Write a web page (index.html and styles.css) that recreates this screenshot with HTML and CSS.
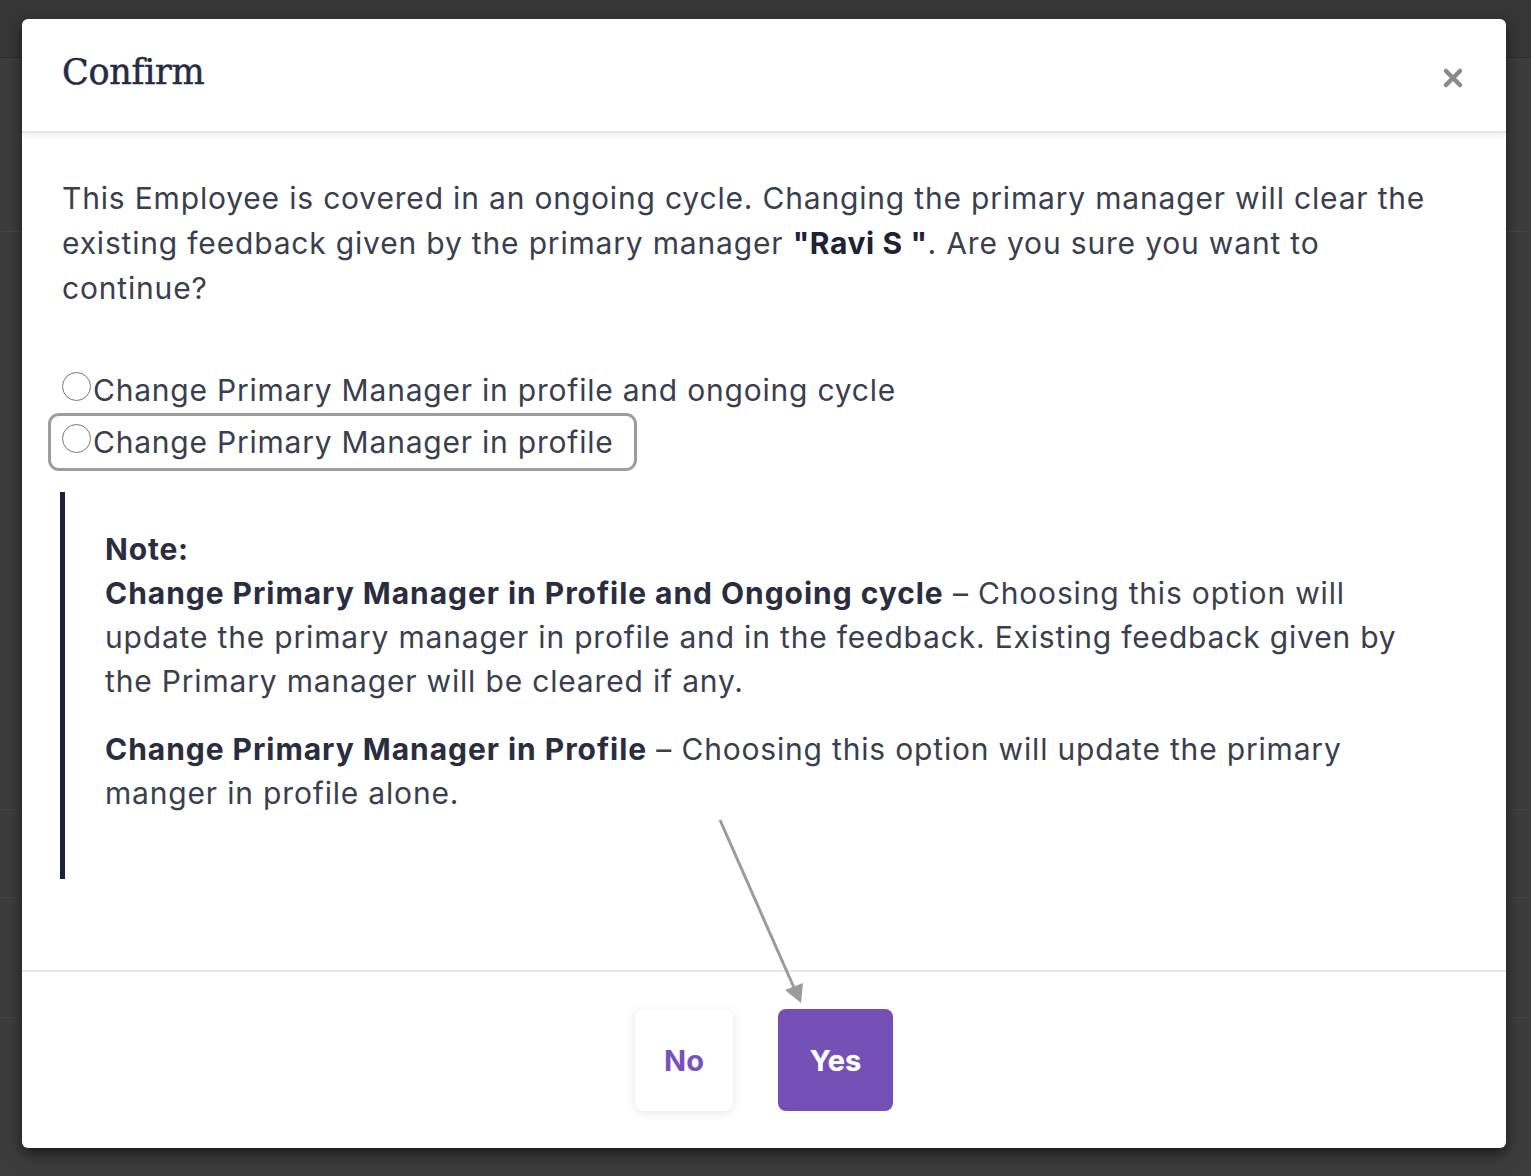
FILE: index.html
```html
<!DOCTYPE html>
<html lang="en">
<head>
<meta charset="utf-8">
<title>Confirm</title>
<link rel="stylesheet" href="styles.css">
</head>
<body>
<div class="backdrop">
  <div class="bd-top"></div>
  <div class="bd-row bd-r1"></div>
  <div class="bd-row bd-r2"></div>
  <div class="bd-row bd-r3"></div>
  <div class="bd-row bd-r4"></div>
  <div class="bd-row bd-r5"></div>
</div>

<div class="modal" role="dialog" aria-labelledby="modal-title">
  <div class="modal-header">
    <h2 id="modal-title" class="modal-title">Confirm</h2>
    <button class="close-btn" aria-label="Close">
      <svg width="22" height="22" viewBox="0 0 22 22"><path d="M4 4 L18 18 M18 4 L4 18" stroke="#8a8a8a" stroke-width="4.5" stroke-linecap="round"/></svg>
    </button>
  </div>

  <div class="modal-body">
    <p class="lead">This Employee is covered in an ongoing cycle. Changing the primary manager will clear the existing feedback given by the primary manager <b>"Ravi S "</b>. Are you sure you want to continue?</p>

    <div class="options">
      <label class="option"><span class="radio"></span>Change Primary Manager in profile and ongoing cycle</label>
      <label class="option focused"><span class="radio"></span>Change Primary Manager in profile</label>
    </div>

    <div class="note">
      <div class="note-title">Note:</div>
      <p><b>Change Primary Manager in Profile and Ongoing cycle</b> – Choosing this option will update the primary manager in profile and in the feedback. Existing feedback given by the Primary manager will be cleared if any.</p>
      <p class="second"><b>Change Primary Manager in Profile</b> – Choosing this option will update the primary manger in profile alone.</p>
    </div>
  </div>

  <div class="modal-footer">
    <button class="btn btn-no">No</button>
    <button class="btn btn-yes">Yes</button>
  </div>
</div>

<svg class="annotation" width="1531" height="1176" viewBox="0 0 1531 1176">
  <line x1="720" y1="820" x2="795" y2="990" stroke="#9b9b9b" stroke-width="3"/>
  <polygon points="801,1003 785,990 803,983" fill="#9b9b9b"/>
</svg>
</body>
</html>
```

FILE: styles.css
```css
* { box-sizing: border-box; }

html, body {
  margin: 0;
  padding: 0;
}

body {
  background: #3c3c3c;
  width: 1531px;
  height: 1176px;
  overflow: hidden;
  font-family: "Inter", "Liberation Sans", sans-serif;
}

.backdrop {
  display: flex;
  flex-direction: column;
}

.bd-top {
  height: 58px;
  background: #363636;
  border-bottom: 1px solid #2e2e2e;
}

.bd-row {
  border-bottom: 1px solid #444;
}
.bd-r1 { height: 174px; }
.bd-r2 { height: 578px; }
.bd-r3 { height: 88px; }
.bd-r4 { height: 120px; }
.bd-r5 { height: 150px; border-bottom: none; }

.modal {
  position: absolute;
  top: 19px;
  left: 22px;
  width: 1484px;
  height: 1129px;
  background: #fff;
  border-radius: 6px;
  display: flex;
  flex-direction: column;
  box-shadow: 0 6px 14px rgba(0, 0, 0, 0.55);
  overflow: hidden;
}

.modal-header {
  height: 114px;
  flex: none;
  display: flex;
  align-items: flex-start;
  justify-content: space-between;
  padding: 0 42px 0 40px;
  border-bottom: 2px solid #e4e6ea;
  box-shadow: 0 3px 5px rgba(0, 0, 0, 0.06);
  position: relative;
  z-index: 1;
}

.modal-title {
  margin: 33px 0 0;
  font-family: "DejaVu Serif", "Liberation Serif", serif;
  font-weight: normal;
  font-size: 35px;
  line-height: 40px;
  color: #262b45;
  letter-spacing: -0.3px;
  -webkit-text-stroke: 0.5px #262b45;
}

.close-btn {
  margin-top: 48px;
  border: none;
  background: none;
  padding: 0;
  width: 22px;
  height: 22px;
  cursor: pointer;
}
.close-btn svg { display: block; }

.modal-body {
  flex: 1;
  padding: 43px 40px 0;
}

.lead {
  margin: 0;
  font-size: 30px;
  line-height: 45px;
  color: #3a3e4e;
  letter-spacing: 0.82px;
}
.lead b {
  color: #1f2236;
  font-weight: 700;
  letter-spacing: 0.6px;
}

.options {
  margin-top: 53px;
  display: flex;
  flex-direction: column;
}

.option {
  display: flex;
  align-items: center;
  width: fit-content;
  height: 52px;
  margin-left: -11px;
  padding: 0 20px 0 11px;
  border-radius: 8px;
  font-size: 30px;
  color: #3a3e4e;
  letter-spacing: 0.78px;
}
.option.focused {
  outline: 3px solid #9d9d9d;
}

.radio {
  width: 29px;
  height: 29px;
  border: 1.5px solid #777;
  border-radius: 50%;
  margin-top: -8px;
  margin-right: 2px;
  flex: none;
}

.note {
  margin: 24px 0 0 -2px;
  border-left: 5px solid #1d2040;
  padding: 35px 40px 64px 40px;
  font-size: 30px;
  line-height: 44px;
  color: #3a3e4e;
  letter-spacing: 0.82px;
}
.note-title {
  font-weight: 700;
  color: #2a2d40;
}
.note p {
  margin: 0;
}
.note p.second {
  margin-top: 24px;
}
.note b {
  font-weight: 700;
  color: #2a2d40;
  letter-spacing: 0.95px;
}

.modal-footer {
  flex: none;
  height: 178px;
  border-top: 2px solid #e6e8ec;
  display: flex;
  justify-content: center;
  align-items: center;
  gap: 45px;
}

.btn {
  height: 102px;
  border: none;
  border-radius: 8px;
  font-family: "Inter", "Liberation Sans", sans-serif;
  font-size: 29px;
  font-weight: 700;
  padding: 0;
  cursor: pointer;
}
.btn-no {
  background: #fff;
  color: #7a50bb;
  box-shadow: 0 2px 10px rgba(0, 0, 0, 0.1);
  width: 98px;
}
.btn-yes {
  background: #7450b6;
  color: #fff;
  width: 115px;
  text-shadow: 0 0 1px rgba(255,255,255,0.5);
}

.annotation {
  position: absolute;
  top: 0;
  left: 0;
  pointer-events: none;
}
```
